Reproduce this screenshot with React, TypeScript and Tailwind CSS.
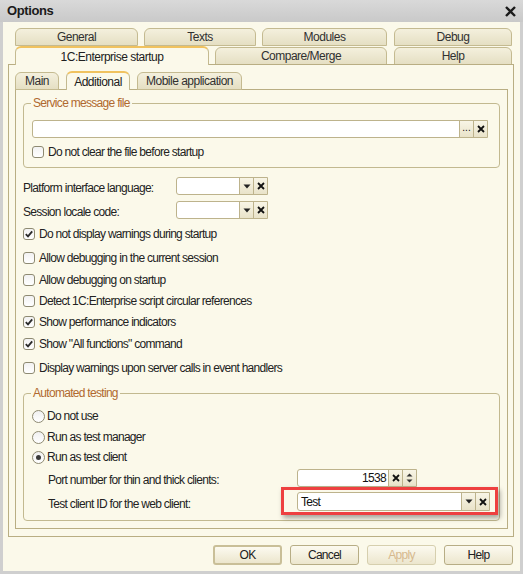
import React from 'react';

const tabBase =
  'h-[18px] flex items-center justify-center rounded-t-[6px] border border-[#c4ba90] text-[12px] tracking-[-0.5px] leading-none';
const tabInactive = 'bg-gradient-to-b from-[#f4f0dd] to-[#e5dfc3] text-[#303030]';
const tabActive = 'relative z-10 bg-[#fbf9ea] border-b-0 border-t-2 border-t-[#f0c25f] text-[#202020] h-[19px]';

function Tab({ label, w, ml, active }: { label: string; w: string; ml?: string; active?: boolean }) {
  return <div className={`${tabBase} ${active ? tabActive : tabInactive} ${w} ${ml ?? ''}`}>{label}</div>;
}

function Check({ checked, label, className }: { checked?: boolean; label: string; className?: string }) {
  return (
    <div className={`h-[20px] flex items-center ${className ?? ''}`}>
      <div className="w-[12px] h-[12px] rounded-[3px] border border-[#8e8a72] bg-gradient-to-b from-[#f2f2f2] to-white flex items-center justify-center">
        {checked && (
          <svg width="10" height="10" viewBox="0 0 10 10">
            <path d="M1.8 5.2 L4 7.4 L8.2 2.4" fill="none" stroke="#2a2a2a" strokeWidth="1.8" />
          </svg>
        )}
      </div>
      <span className="ml-[4px]">{label}</span>
    </div>
  );
}

function Radio({ checked, label, className }: { checked?: boolean; label: string; className?: string }) {
  return (
    <div className={`h-[20px] flex items-center ${className ?? ''}`}>
      <div className="w-[13px] h-[13px] rounded-full border border-[#8e8a72] bg-gradient-to-b from-[#f0f0f0] to-white flex items-center justify-center">
        {checked && <div className="w-[5px] h-[5px] rounded-full bg-[#3a3a3a]" />}
      </div>
      <span className="ml-[2px]">{label}</span>
    </div>
  );
}

const btnCell =
  'w-[14px] h-full flex items-center justify-center border-l border-[#bdb38c] bg-gradient-to-b from-[#f8f5e6] to-[#e9e3c9]';

function XIcon() {
  return (
    <svg width="8" height="8" viewBox="0 0 8 8">
      <path d="M1 1 L7 7 M7 1 L1 7" stroke="#111" strokeWidth="1.8" />
    </svg>
  );
}

function DownIcon() {
  return (
    <svg width="8" height="5" viewBox="0 0 8 5">
      <path d="M0.5 0.5 H7.5 L4 4.5 Z" fill="#222" />
    </svg>
  );
}

function Combo({ w, value, h = 'h-[18px]' }: { w: string; value?: string; h?: string }) {
  return (
    <div className={`${h} flex border border-[#bdb38c] rounded-l-[3px] bg-white`}>
      <div className={`${w} flex items-center px-[3px] text-[#111]`}>{value}</div>
      <div className={btnCell}>
        <DownIcon />
      </div>
      <div className={btnCell}>
        <XIcon />
      </div>
    </div>
  );
}

function Button({ label, isDefault, disabled }: { label: string; isDefault?: boolean; disabled?: boolean }) {
  return (
    <div
      className={`w-[69px] h-[20px] flex items-center justify-center rounded-[3px] bg-gradient-to-b from-[#fcfaf0] to-[#ece6cd] ${
        isDefault ? 'border-2 border-[#c9bf98]' : 'border border-[#b7ad85]'
      } ${disabled ? 'text-[#d6b98e] border-[#d6cfae]' : 'text-[#202020]'}`}
    >
      {label}
    </div>
  );
}

export default function App() {
  return (
    <div className="w-[523px] h-[574px] flex flex-col bg-[#cfcfcf] font-['Liberation_Sans',Arial,sans-serif] text-[12px] tracking-[-0.7px] text-[#222]">
      {/* Title bar */}
      <div className="h-[22px] flex items-center justify-between pl-[7px] pr-[7px] bg-gradient-to-b from-[#d9d9d9] to-[#c9c9c9]">
        <span className="font-bold text-[13px] tracking-[-0.4px] text-[#1a1a1a]">Options</span>
        <svg width="11" height="11" viewBox="0 0 11 11">
          <path d="M1 1 L10 10 M10 1 L1 10" stroke="#1a1a1a" strokeWidth="2.4" />
        </svg>
      </div>

      <div className="flex-1 mx-[3px] mb-[3px] bg-[#fbf9ea] flex flex-col">
        {/* Top tabs */}
        <div className="pt-[6px] pl-[12px]">
          <div className="flex">
            <Tab label="General" w="w-[123px]" />
            <Tab label="Texts" w="w-[112px]" ml="ml-[6px]" />
            <Tab label="Modules" w="w-[125px]" ml="ml-[6px]" />
            <Tab label="Debug" w="w-[118px]" ml="ml-[7px]" />
          </div>
          <div className="flex items-end -mb-px">
            <Tab label="1C:Enterprise startup" w="w-[194px]" active />
            <Tab label="Compare/Merge" w="w-[172px]" ml="ml-[6px]" />
            <Tab label="Help" w="w-[118px]" ml="ml-[7px]" />
          </div>
        </div>

        {/* Outer panel */}
        <div className="ml-[5px] w-[506px] h-[473px] border border-[#b9ae83] pt-[6px] pl-[6px]">
          <div className="flex items-end -mb-px">
            <Tab label="Main" w="w-[44px]" />
            <Tab label="Additional" w="w-[64px]" ml="ml-[7px]" active />
            <Tab label="Mobile application" w="w-[105px]" ml="ml-[7px]" />
          </div>

          {/* Inner panel */}
          <div className="w-[493px] h-[440px] border border-[#b9ae83] pl-[7px] pt-[6px]">
            <fieldset className="w-[477px] h-[72px] border border-[#c2b990] rounded-[4px] pl-[8px]">
              <legend className="-ml-[1px] px-[2px] leading-[14px] text-[#b0692f]">Service message file</legend>
              <div className="mt-[10px] h-[18px] flex border border-[#bdb38c] rounded-l-[3px] bg-white w-[456px]">
                <div className="flex-1" />
                <div className={btnCell}>
                  <span className="text-[10px] leading-none text-[#111] -mt-[3px] tracking-normal">...</span>
                </div>
                <div className={btnCell}>
                  <XIcon />
                </div>
              </div>
              <Check label="Do not clear the file before startup" className="mt-[4px]" />
            </fieldset>

            <div className="mt-[9px] flex items-center">
              <span className="w-[153px] leading-[14px] pt-[3px]">Platform interface language:</span>
              <Combo w="w-[62px]" />
            </div>
            <div className="mt-[6px] flex items-center">
              <span className="w-[153px] leading-[14px] pt-[3px]">Session locale code:</span>
              <Combo w="w-[62px]" />
            </div>

            <Check checked label="Do not display warnings during startup" className="mt-[5px]" />
            <Check label="Allow debugging in the current session" className="mt-[4px]" />
            <Check label="Allow debugging on startup" className="mt-[2px]" />
            <Check label="Detect 1C:Enterprise script circular references" className="mt-[1px]" />
            <Check checked label="Show performance indicators" className="mt-[1px]" />
            <Check checked label={'Show "All functions" command'} className="mt-[2px]" />
            <Check label="Display warnings upon server calls in event handlers" className="mt-[4px]" />

            <fieldset className="mt-[8px] w-[477px] h-[135px] border border-[#c2b990] rounded-[4px] pl-[8px]">
              <legend className="-ml-[1px] px-[2px] leading-[14px] text-[#b0692f]">Automated testing</legend>
              <Radio label="Do not use" className="mt-[6px]" />
              <Radio label="Run as test manager" className="mt-[1px]" />
              <Radio checked label="Run as test client" />
              <div className="mt-[2px] flex items-center pl-[16px]">
                <span className="w-[249px] leading-[14px] pt-[4px]">Port number for thin and thick clients:</span>
                <div className="h-[18px] flex border border-[#bdb38c] rounded-l-[3px] bg-white">
                  <div className="w-[90px] flex items-center justify-end px-[2px] text-[#111]">1538</div>
                  <div className={btnCell}>
                    <XIcon />
                  </div>
                  <div className={`${btnCell} flex-col gap-[2px]`}>
                    <svg width="7" height="4" viewBox="0 0 7 4">
                      <path d="M0.5 3.5 H6.5 L3.5 0.5 Z" fill="#333" />
                    </svg>
                    <svg width="7" height="4" viewBox="0 0 7 4">
                      <path d="M0.5 0.5 H6.5 L3.5 3.5 Z" fill="#333" />
                    </svg>
                  </div>
                </div>
              </div>
              <div className="mt-[5px] flex items-center pl-[16px]">
                <span className="w-[249px] leading-[14px] pt-[4px]">Test client ID for the web client:</span>
                <div className="relative">
                  <div className="absolute -left-[16px] -right-[8px] -top-[5px] -bottom-[4px] border-[3px] border-[#ee4040] shadow-[2px_3px_5px_rgba(0,0,0,0.35)]" />
                  <Combo w="w-[163px]" value="Test" h="h-[19px]" />
                </div>
              </div>
            </fieldset>
          </div>
        </div>

        {/* Bottom buttons */}
        <div className="mt-[8px] flex justify-end gap-[8px] pr-[7px]">
          <Button label="OK" isDefault />
          <Button label="Cancel" />
          <Button label="Apply" disabled />
          <Button label="Help" />
        </div>
      </div>
    </div>
  );
}
